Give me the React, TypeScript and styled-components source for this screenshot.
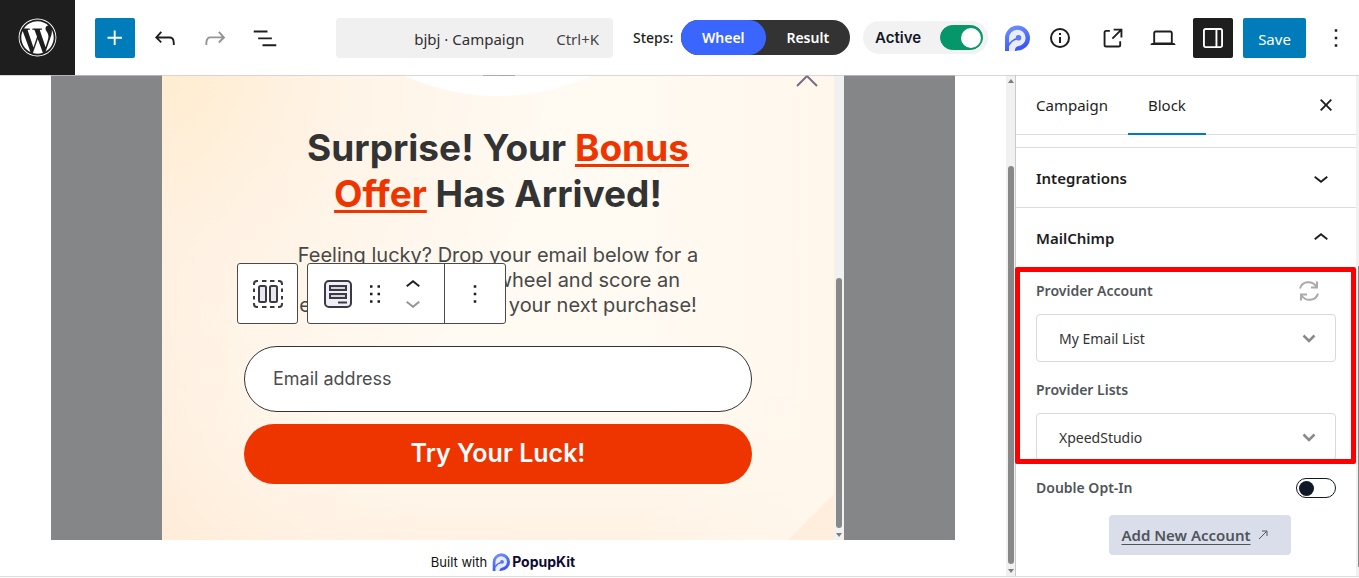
import React from "react";
import styled, { createGlobalStyle } from "styled-components";
import { FaWordpress } from "react-icons/fa";

const ui = `"Noto Sans", "Open Sans", sans-serif`;
const inter = `Inter, "Liberation Sans", sans-serif`;

const GlobalStyle = createGlobalStyle`
  *, *::before, *::after { box-sizing: border-box; }
  body { margin: 0; background: #fff; color: #1e1e1e; font-family: ${ui}; }
  button, input, select { font: inherit; color: inherit; }
  button { border: 0; padding: 0; background: none; cursor: pointer; }
  h1, h2, p { margin: 0; }
  svg { display: block; flex: none; }
`;

const Shell = styled.div`
  display: flex;
  flex-direction: column;
  min-height: 100vh;
  padding-bottom: 1px;
`;

/* ---------- top bar ---------- */

const TopBar = styled.header`
  position: relative;
  z-index: 2;
  display: flex;
  align-items: center;
  height: 75px;
  padding-right: 3px;
  background: #fff;
  box-shadow: 0 1px 0 rgba(200, 200, 205, 0.7);
`;

const SiteLink = styled.a`
  display: flex;
  align-items: center;
  justify-content: center;
  width: 75px;
  height: 75px;
  flex: none;
  background: #1e1e1e;
  color: #fff;
`;

const Group = styled.div<{ $gap: number; $before?: number }>`
  display: flex;
  align-items: center;
  flex: none;
  gap: ${(p) => p.$gap}px;
  margin-left: ${(p) => p.$before ?? 0}px;
`;

const IconButton = styled.button<{ $tone?: "plain" | "blue" | "dark" | "muted"; $width?: number }>`
  display: flex;
  align-items: center;
  justify-content: center;
  width: ${(p) => p.$width ?? 40}px;
  height: 40px;
  flex: none;
  border-radius: 2px;
  background: ${(p) => (p.$tone === "blue" ? "#007cba" : p.$tone === "dark" ? "#1e1e1e" : "transparent")};
  color: ${(p) => (p.$tone === "blue" || p.$tone === "dark" ? "#fff" : p.$tone === "muted" ? "#949494" : "#1e1e1e")};
`;

const SaveButton = styled.button`
  width: 63px;
  height: 40px;
  padding-top: 2px;
  border-radius: 2px;
  background: #007cba;
  color: #fff;
  font-size: 15px;
`;

const DocumentSlot = styled.div`
  display: flex;
  justify-content: flex-end;
  flex: 1;
  min-width: 0;
  padding: 0 20px;
`;

const DocumentBar = styled.button`
  display: flex;
  align-items: center;
  justify-content: flex-end;
  gap: 32px;
  width: 277px;
  height: 40px;
  padding: 2px 14px 0 0;
  border-radius: 4px;
  background: #f0f0f0;
  color: #2f2f2f;
  font-size: 15px;
  white-space: nowrap;
`;

const Shortcut = styled.span`
  color: #444;
`;

const StepsLabel = styled.span`
  width: 40px;
  font-size: 14px;
  font-weight: 500;
  white-space: nowrap;
`;

const StepSwitch = styled.div`
  display: flex;
  width: 169px;
  height: 35px;
  border-radius: 18px;
  background: #333;
`;

const Step = styled.button<{ $active?: boolean }>`
  flex: 1;
  border-radius: 18px;
  background: ${(p) => (p.$active ? "#3a66ff" : "transparent")};
  color: #fff;
  font-size: 14px;
  font-weight: 600;
`;

const StatusPill = styled.label`
  display: flex;
  align-items: center;
  justify-content: space-between;
  width: 125px;
  height: 33px;
  padding: 0 5px 0 12px;
  border-radius: 17px;
  background: #f2f2f2;
  font-family: ${inter};
  font-size: 15px;
  font-weight: 600;
  color: #111827;
`;

const Toggle = styled.input<{ $large?: boolean }>`
  appearance: none;
  display: flex;
  align-items: center;
  width: ${(p) => (p.$large ? 43 : 40)}px;
  height: ${(p) => (p.$large ? 25 : 20)}px;
  margin: 0;
  padding: 0 2px;
  border: 1px solid #111827;
  border-radius: 13px;
  background: #fff;

  &::before {
    content: "";
    width: ${(p) => (p.$large ? 20 : 15)}px;
    height: ${(p) => (p.$large ? 20 : 15)}px;
    border-radius: 50%;
    background: #111827;
  }

  &:checked {
    justify-content: flex-end;
    padding: 0 1px;
    border-color: #059669;
    background: #059669;
  }

  &:checked::before { background: #fff; }
`;

/* ---------- canvas ---------- */

const Workspace = styled.div`
  display: flex;
  flex: 1;
  border-bottom: 1px solid #ddd;
`;

const Canvas = styled.main`
  display: flex;
  flex-direction: column;
  flex: 1;
  min-width: 0;
`;

const Backdrop = styled.div`
  display: flex;
  justify-content: center;
  margin: 0 51px;
  background: #858688;
`;

const Popup = styled.section`
  display: flex;
  width: 682px;
  max-width: 100%;
`;

const PopupBody = styled.div`
  position: relative;
  display: flex;
  flex-direction: column;
  align-items: center;
  flex: 1;
  min-width: 0;
  padding-bottom: 56px;
  background:
    linear-gradient(315deg, #ffeedd 32px, transparent 33px),
    linear-gradient(45deg, #ffecd9 0%, rgba(255, 240, 224, 0.5) 14%, transparent 26%),
    radial-gradient(circle at 0 0, #ffedd0 0%, rgba(255, 240, 224, 0.7) 20%, transparent 48%),
    linear-gradient(to right, #fff2e4 0%, rgba(255, 246, 234, 0.6) 12%, transparent 28%),
    linear-gradient(to left, #fff7ec 0%, transparent 30%),
    linear-gradient(to top, #fff2e4 0%, rgba(255, 246, 234, 0.6) 16%, transparent 34%),
    #fffaf2;
`;

const PopupClose = styled.button`
  position: absolute;
  top: 0;
  right: 16px;
  color: #7a6c86;
`;

const TextColumn = styled.div`
  display: flex;
  flex-direction: column;
  gap: 26px;
  width: 420px;
  max-width: 100%;
  margin: 29px 0 28px;
  text-align: center;
  font-family: ${inter};
`;

const Heading = styled.h1`
  color: #333;
  font-size: 37px;
  font-weight: 700;
  line-height: 46px;
`;

const Accent = styled.span`
  color: #ee3500;
  text-decoration: underline;
  text-decoration-thickness: 3px;
  text-underline-offset: 3px;
`;

const Lead = styled.p`
  color: #484848;
  font-size: 20px;
  line-height: 25px;
`;

const SignupForm = styled.form`
  display: flex;
  flex-direction: column;
  gap: 12px;
  width: 508px;
  max-width: 100%;
  font-family: ${inter};
`;

const EmailInput = styled.input`
  width: 100%;
  height: 66px;
  padding: 0 28px 2px;
  border: 1px solid #333;
  border-radius: 33px;
  background: #fff;
  font-size: 18px;

  &::placeholder { color: #4d4d4d; opacity: 1; }
`;

const SubmitButton = styled.button`
  height: 60px;
  padding-bottom: 2px;
  border-radius: 30px;
  background: #ee3500;
  color: #fff;
  font-size: 25px;
  font-weight: 600;
`;

const BlockTools = styled.div`
  position: absolute;
  top: 188px;
  left: 75px;
  display: flex;
  gap: 9px;
`;

const ToolBox = styled.div`
  display: flex;
  height: 61px;
  border: 1px solid #4a4a4a;
  border-radius: 3px;
  background: #fff;
`;

const ToolSegment = styled.div<{ $width: number; $divided?: boolean }>`
  display: flex;
  align-items: center;
  justify-content: center;
  gap: 8px;
  width: ${(p) => p.$width}px;
  border-left: ${(p) => (p.$divided ? "1px solid #4a4a4a" : "0")};
`;

const ToolButton = styled.button<{ $muted?: boolean; $short?: boolean }>`
  display: flex;
  justify-content: center;
  align-items: center;
  height: ${(p) => (p.$short ? "18px" : "auto")};
  color: ${(p) => (p.$muted ? "#949494" : "#1e1e1e")};
`;

const Movers = styled.div`
  display: flex;
  flex-direction: column;
`;

const Credit = styled.footer`
  display: flex;
  align-items: center;
  justify-content: center;
  gap: 5px;
  flex: 1;
  min-height: 36px;
  padding-top: 7px;
  font-family: ${inter};
  font-size: 13px;
  color: #111;
`;

const Brand = styled.a`
  display: flex;
  align-items: center;
  gap: 2px;
  color: #0d0b33;
  font-size: 14px;
  font-weight: 700;
  text-decoration: none;
`;

/* ---------- scroll bars ---------- */

const ScrollTrack = styled.div<{ $line?: boolean }>`
  display: flex;
  flex-direction: column;
  align-items: center;
  flex: none;
  width: 10px;
  padding: 4px 0 3px;
  overflow: hidden;
  background: #f1f1f1;
  border-right: ${(p) => (p.$line ? "1px solid #c9c9c9" : "0")};
`;

const ScrollGap = styled.div<{ $grow: number }>`
  flex: ${(p) => p.$grow} 0 0;
`;

const ScrollThumb = styled.div<{ $grow: number }>`
  flex: ${(p) => p.$grow} 0 0;
  width: 6px;
  margin: 4px 0 5px;
  border-radius: 3px;
  background: #888;
`;

const EdgeTrack = styled.div`
  display: flex;
  flex-direction: column;
  flex: none;
  width: 3px;
  padding: 4px 0 9px 2px;
  background: #f1f1f1;
`;

const EdgeThumb = styled.div`
  flex: 300 0 0;
  background: #888;
`;

/* ---------- settings sidebar ---------- */

const Sidebar = styled.aside`
  width: 340px;
  flex: none;
  background: #fff;
`;

const TabRow = styled.div`
  display: flex;
  align-items: stretch;
  height: 60px;
  margin-bottom: 12px;
  padding-right: 15px;
  border-bottom: 1px solid #ddd;
`;

const Tab = styled.button<{ $active?: boolean }>`
  height: 60px;
  padding: 2px 20px 0;
  border-bottom: 2px solid ${(p) => (p.$active ? "#007cba" : "transparent")};
  font-size: 15px;
`;

const CloseButton = styled.button`
  margin-left: auto;
`;

const PanelToggle = styled.button`
  display: flex;
  align-items: center;
  justify-content: space-between;
  width: 100%;
  height: 60px;
  padding: 0 20px;
  border-top: 1px solid #ddd;
  font-size: 15px;
  font-weight: 600;
`;

const Fields = styled.div`
  display: flex;
  flex-direction: column;
  gap: 17px;
  padding: 0 20px 20px;
`;

const Highlighted = styled.div`
  position: relative;
  display: flex;
  flex-direction: column;
  gap: 18px;
  padding-top: 14px;

  &::after {
    content: "";
    position: absolute;
    inset: 0 -20px -3px -21px;
    border: 5px solid #ff0000;
    border-radius: 2px;
    pointer-events: none;
  }
`;

const Field = styled.div`
  display: flex;
  flex-direction: column;
  gap: 13px;
`;

const Row = styled.div`
  display: flex;
  align-items: center;
  justify-content: space-between;
  height: 20px;
`;

const Label = styled.label`
  color: #50555a;
  font-size: 14px;
  font-weight: 600;
  line-height: 20px;
`;

const RefreshButton = styled.button`
  margin-right: 16px;
`;

const SelectWrap = styled.div`
  display: grid;
  align-items: center;
`;

const Select = styled.select`
  grid-area: 1 / 1;
  appearance: none;
  width: 100%;
  height: 48px;
  padding: 0 44px 0 22px;
  border: 1px solid #d9d9d9;
  border-radius: 4px;
  background: #fff;
  color: #333;
  font-size: 14px;
`;

const SelectArrow = styled.svg`
  grid-area: 1 / 1;
  justify-self: end;
  margin-right: 19px;
  pointer-events: none;
`;

const AccountLink = styled.a`
  display: flex;
  align-items: center;
  align-self: center;
  gap: 6px;
  height: 40px;
  margin-left: 28px;
  padding: 0 22px 0 12px;
  border-radius: 4px;
  background: #d9deea;
  color: #50555a;
  font-size: 15px;
  font-weight: 600;
  white-space: nowrap;
  text-decoration: none;

  span { text-decoration: underline; text-underline-offset: 3px; }
`;

/* ---------- drawings ---------- */

function Glyph({ d, size = 30 }: { d: string; size?: number }) {
  return (
    <svg width={size} height={size} viewBox="0 0 24 24" fill="currentColor" aria-hidden="true">
      <path d={d} />
    </svg>
  );
}

const paths = {
  plus: "M11 12.5V17.5H12.5V12.5H17.5V11H12.5V6H11V11H6V12.5H11Z",
  undo: "M18.3 11.7c-.6-.6-1.4-.9-2.3-.9H6.7l2.9-3.3-1.1-1-4.5 5L8.5 16l1-1-2.7-2.7H16c.5 0 .9.2 1.3.5 1 1 1 3.4 1 4.5v.3h1.5v-.2c0-1.5 0-4.3-1.5-5.7z",
  redo: "M15.6 6.5l-1.1 1 2.9 3.3H8c-.9 0-1.7.3-2.3.9-1.4 1.5-1.4 4.2-1.4 5.6v.2h1.5v-.3c0-1.1 0-3.5 1-4.5.3-.3.7-.5 1.3-.5h9.2L14.5 15l1.1 1.1 4.6-4.6-4.6-5z",
  list: "M3 6h11v1.5H3V6Zm3.5 5.5h11V13h-11v-1.5ZM21 17H10v1.5h11V17Z",
  external: "M19.5 4.5h-7V6h4.44l-5.97 5.97 1.06 1.06L18 7.06v4.44h1.5v-7Zm-13 1a2 2 0 0 0-2 2v10a2 2 0 0 0 2 2h10a2 2 0 0 0 2-2v-3H17v3a.5.5 0 0 1-.5.5h-10a.5.5 0 0 1-.5-.5v-10a.5.5 0 0 1 .5-.5h3V5.5h-3Z",
  laptop: "M20.5 16h-.7V8c0-1.1-.9-2-2-2H6.2c-1.1 0-2 .9-2 2v8h-.7c-.8 0-1.5.7-1.5 1.5h20c0-.8-.7-1.5-1.5-1.5zM5.7 8c0-.3.2-.5.5-.5h11.6c.3 0 .5.2.5.5v7.6H5.7V8z",
  drawer: "M18 4H6c-1.1 0-2 .9-2 2v12c0 1.1.9 2 2 2h12c1.1 0 2-.9 2-2V6c0-1.1-.9-2-2-2zm-4 14.5H6c-.3 0-.5-.2-.5-.5V6c0-.3.2-.5.5-.5h8v13zm4.5-.5c0 .3-.2.5-.5.5h-2.5v-13H18c.3 0 .5.2.5.5v12z",
  more: "M13 19h-2v-2h2v2zm0-6h-2v-2h2v2zm0-6h-2V5h2v2z",
  drag: "M8 7h2V5H8v2zm0 6h2v-2H8v2zm0 6h2v-2H8v2zm6-14v2h2V5h-2zm0 8h2v-2h-2v2zm0 6h2v-2h-2v2z",
  close: "M12 13.06l3.712 3.713 1.061-1.06L13.061 12l3.712-3.712-1.06-1.06L12 10.938 8.288 7.227l-1.061 1.06L10.939 12l-3.712 3.712 1.06 1.061L12 13.061z",
  down: "M17.5 11.6L12 16l-5.5-4.4.9-1.2L12 14l4.5-3.6 1 1.2z",
  up: "M6.5 12.4L12 8l5.5 4.4-.9 1.2L12 10l-4.5 3.6-1-1.2z",
};

function InfoIcon() {
  return (
    <svg width="22" height="22" viewBox="0 0 22 22" fill="none" stroke="currentColor" strokeWidth="2" aria-hidden="true">
      <circle cx="11" cy="11" r="9" />
      <path d="M11 10v6M11 6v2" />
    </svg>
  );
}

function KitLogo({ id, size }: { id: string; size: number }) {
  return (
    <svg width={size} height={size} viewBox="0 0 26 26" aria-hidden="true">
      <defs>
        <linearGradient id={id} x1="0" y1="0" x2="0.4" y2="1">
          <stop offset="0" stopColor="#7396ff" />
          <stop offset="1" stopColor="#3b55f6" />
        </linearGradient>
      </defs>
      <path d="M1 26V13A12.5 12.5 0 1 1 13.500 25.500Q12 26 10 26Z" fill={`url(#${id})`} />
      <path d="M5 26V13A8.300 8.300 0 1 1 14 21.200Q11 21.700 10.800 26z" fill="#e9eeff" />
      <path d="M4.500 20.500C7 16 9.500 14.500 13.500 13.500" fill="none" stroke="#4a67fa" strokeWidth="1.800" />
      <circle cx="14.500" cy="12.800" r="2.800" fill="#5b78fb" />
    </svg>
  );
}

function PopupArc() {
  return (
    <svg width="190" height="21" viewBox="0 0 190 21" aria-hidden="true">
      <path d="M0 0H190A225 225 0 0 1 0 0z" fill="#fff" />
      <rect x="80" width="16" height="1" fill="#e2452c" />
      <rect x="96" width="16" height="1" fill="#3a57b5" />
    </svg>
  );
}

function Caret({ up }: { up?: boolean }) {
  return (
    <svg width="6" height="4" viewBox="0 0 6 4" aria-hidden="true">
      <path d={up ? "M0 4L3 0L6 4z" : "M0 0H6L3 4z"} fill="#7d7d7d" />
    </svg>
  );
}

function ScrollBar({ before, thumb, line, top }: { before: number; thumb: number; line?: boolean; top?: boolean }) {
  return (
    <ScrollTrack $line={line} aria-hidden="true">
      {top && <Caret up />}
      <ScrollGap $grow={before} />
      <ScrollThumb $grow={thumb} />
      <Caret />
    </ScrollTrack>
  );
}

function ContainerIcon() {
  return (
    <svg width="32" height="30" viewBox="0 0 32 30" fill="none" stroke="#3a3a46" strokeWidth="2" aria-hidden="true">
      <path d="M2 6V5Q2 2 5 2H6M10 2H14.500M18 2H22.500M26 2H27Q30 2 30 5V6M30 9.500V13M30 17V20.500M30 24V25Q30 28 27 28H26M22.500 28H18M14.500 28H10M6 28H5Q2 28 2 25V24M2 20.500V17M2 13V9.500" />
      <rect x="7" y="7" width="7" height="16" rx="1.500" fill="#e8e8ee" />
      <rect x="18" y="7" width="7" height="16" rx="1.500" fill="#e8e8ee" />
    </svg>
  );
}

function FormIcon() {
  return (
    <svg width="28" height="28" viewBox="0 0 28 28" fill="none" stroke="#3a3a46" strokeWidth="2" aria-hidden="true">
      <rect x="1" y="1" width="26" height="26" rx="4" fill="#f0f0f4" />
      <rect x="6" y="6" width="16" height="4" fill="#d5d5dd" />
      <rect x="6" y="14" width="16" height="4" fill="#d5d5dd" />
      <path d="M14 22.500H23" />
    </svg>
  );
}

function RefreshIcon() {
  return (
    <svg width="22" height="22" viewBox="0 0 22 22" fill="none" stroke="#aaa" strokeWidth="2" aria-hidden="true">
      <path d="M2 8.500C4 1 14 0 18.500 6.500M19 1.500V7.500H13M20 13.500C18 21 8 22 3.500 15.500M3 20.500V14.500H9" />
    </svg>
  );
}

function SelectField({ id, label, value, action }: { id: string; label: string; value: string; action?: React.ReactNode }) {
  return (
    <Field>
      <Row>
        <Label htmlFor={id}>{label}</Label>
        {action}
      </Row>
      <SelectWrap>
        <Select id={id} defaultValue={value}>
          <option>{value}</option>
        </Select>
        <SelectArrow width="16" height="16" viewBox="0 0 16 16" fill="none" stroke="#888" strokeWidth="2.500" aria-hidden="true">
          <path d="M2.500 5.500L8 11l5.500-5.500" />
        </SelectArrow>
      </SelectWrap>
    </Field>
  );
}

export default function App() {
  return (
    <>
      <GlobalStyle />
      <Shell>
        <TopBar>
          <SiteLink href="#" aria-label="View posts">
            <FaWordpress size={39} />
          </SiteLink>
          <Group $gap={10} $before={20}>
            <IconButton $tone="blue" aria-label="Add block"><Glyph d={paths.plus} /></IconButton>
            <IconButton aria-label="Undo"><Glyph d={paths.undo} /></IconButton>
            <IconButton $tone="muted" aria-label="Redo"><Glyph d={paths.redo} /></IconButton>
            <IconButton aria-label="Document overview"><Glyph d={paths.list} /></IconButton>
          </Group>
          <DocumentSlot>
            <DocumentBar>
              <span>bjbj · Campaign</span>
              <Shortcut>Ctrl+K</Shortcut>
            </DocumentBar>
          </DocumentSlot>
          <Group $gap={8}>
            <StepsLabel>Steps:</StepsLabel>
            <StepSwitch>
              <Step $active>Wheel</Step>
              <Step>Result</Step>
            </StepSwitch>
          </Group>
          <Group $gap={16} $before={13}>
            <StatusPill>
              Active
              <Toggle type="checkbox" defaultChecked $large />
            </StatusPill>
            <IconButton $width={26} aria-label="PopupKit"><KitLogo id="kit-top" size={26} /></IconButton>
            <IconButton $width={28} aria-label="Details"><InfoIcon /></IconButton>
          </Group>
          <Group $gap={10} $before={19}>
            <IconButton aria-label="View campaign"><Glyph d={paths.external} /></IconButton>
            <IconButton aria-label="Preview"><Glyph d={paths.laptop} /></IconButton>
            <IconButton $tone="dark" aria-label="Settings"><Glyph d={paths.drawer} /></IconButton>
            <SaveButton>Save</SaveButton>
            <IconButton aria-label="Options"><Glyph d={paths.more} /></IconButton>
          </Group>
        </TopBar>

        <Workspace>
          <Canvas>
            <Backdrop>
              <Popup>
                <PopupBody>
                  <PopupArc />
                  <PopupClose aria-label="Close popup">
                    <svg width="22" height="12" viewBox="0 0 22 12" fill="none" stroke="currentColor" strokeWidth="2" aria-hidden="true">
                      <path d="M1 11L11 1L21 11" />
                    </svg>
                  </PopupClose>
                  <TextColumn>
                    <Heading>
                      Surprise! Your <Accent>Bonus</Accent> <Accent>Offer</Accent> Has Arrived!
                    </Heading>
                    <Lead>
                      Feeling lucky? Drop your email below for a chance to spin the wheel and score an
                      exclusive discount on your next purchase!
                    </Lead>
                  </TextColumn>
                  <SignupForm>
                    <EmailInput type="email" placeholder="Email address" aria-label="Email address" />
                    <SubmitButton type="button">Try Your Luck!</SubmitButton>
                  </SignupForm>
                  <BlockTools>
                    <ToolBox>
                      <ToolSegment $width={59}>
                        <ToolButton aria-label="Select container"><ContainerIcon /></ToolButton>
                      </ToolSegment>
                    </ToolBox>
                    <ToolBox>
                      <ToolSegment $width={136}>
                        <ToolButton aria-label="Form"><FormIcon /></ToolButton>
                        <ToolButton aria-label="Drag"><Glyph d={paths.drag} /></ToolButton>
                        <Movers>
                          <ToolButton $short aria-label="Move up"><Glyph d={paths.up} /></ToolButton>
                          <ToolButton $short $muted aria-label="Move down"><Glyph d={paths.down} /></ToolButton>
                        </Movers>
                      </ToolSegment>
                      <ToolSegment $width={61} $divided>
                        <ToolButton aria-label="More"><Glyph d={paths.more} /></ToolButton>
                      </ToolSegment>
                    </ToolBox>
                  </BlockTools>
                </PopupBody>
                <ScrollBar before={195} thumb={250} />
              </Popup>
            </Backdrop>
            <Credit>
              Built with
              <Brand href="#">
                <KitLogo id="kit-credit" size={18} />
                PopupKit
              </Brand>
            </Credit>
          </Canvas>
          <ScrollBar before={79} thumb={397} line top />

          <Sidebar>
            <TabRow>
              <Tab>Campaign</Tab>
              <Tab $active>Block</Tab>
              <CloseButton aria-label="Close settings"><Glyph d={paths.close} /></CloseButton>
            </TabRow>
            <PanelToggle aria-expanded="false">
              Integrations
              <Glyph d={paths.down} />
            </PanelToggle>
            <PanelToggle aria-expanded="true">
              MailChimp
              <Glyph d={paths.up} />
            </PanelToggle>
            <Fields>
              <Highlighted>
                <SelectField
                  id="provider-account"
                  label="Provider Account"
                  value="My Email List"
                  action={<RefreshButton aria-label="Refresh accounts"><RefreshIcon /></RefreshButton>}
                />
                <SelectField id="provider-list" label="Provider Lists" value="XpeedStudio" />
              </Highlighted>
              <Row>
                <Label htmlFor="double-opt-in">Double Opt-In</Label>
                <Toggle id="double-opt-in" type="checkbox" />
              </Row>
              <AccountLink href="#">
                <span>Add New Account</span>
                <svg width="12" height="12" viewBox="0 0 12 12" fill="none" stroke="currentColor" aria-hidden="true">
                  <path d="M2 10L9.500 2.500M5 2H10V7" />
                </svg>
              </AccountLink>
            </Fields>
          </Sidebar>
          <EdgeTrack aria-hidden="true">
            <ScrollGap $grow={186} />
            <EdgeThumb />
          </EdgeTrack>
        </Workspace>
      </Shell>
    </>
  );
}
